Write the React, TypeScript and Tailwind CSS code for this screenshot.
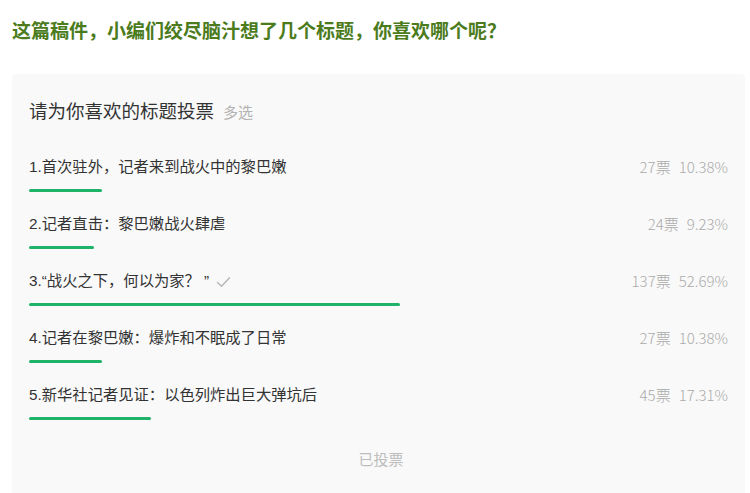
const options = [
  { label: '1.首次驻外，记者来到战火中的黎巴嫩', votes: 27, pct: 10.38 },
  { label: '2.记者直击：黎巴嫩战火肆虐', votes: 24, pct: 9.23 },
  { label: '3.“战火之下，何以为家？ ”', votes: 137, pct: 52.69, picked: true },
  { label: '4.记者在黎巴嫩：爆炸和不眠成了日常', votes: 27, pct: 10.38 },
  { label: '5.新华社记者见证：以色列炸出巨大弹坑后', votes: 45, pct: 17.31 },
];

function Check() {
  return (
    <svg width="15" height="12" viewBox="0 0 15 12" fill="none" className="ml-[7px]">
      <path d="M1.5 6.5 L5.5 10.2 L13.5 1.8" stroke="#b5b5b5" strokeWidth="1.4" strokeLinecap="round" strokeLinejoin="round" />
    </svg>
  );
}

export default function App() {
  return (
    <div
      className="w-[750px] h-[493px] overflow-hidden bg-white"
      style={{ fontFamily: '"Noto Sans CJK SC", "Noto Sans", sans-serif' }}
    >
      {/* Title */}
      <h1 className="pl-3 pt-[18px] text-[19px] leading-[24px] font-bold text-[#4b7b1c]">
        这篇稿件，小编们绞尽脑汁想了几个标题，你喜欢哪个呢？
      </h1>

      {/* Vote card */}
      <div className="mt-[32px] ml-3 mr-[5px] bg-[#f9f9f9] rounded-sm pl-[17px] pr-3 pt-[23px] pb-14">
        <div className="flex items-baseline gap-[9px]">
          <span className="text-[18.5px] leading-[26px] text-[#333]">请为你喜欢的标题投票</span>
          <span className="text-[15px] text-[#b2b2b2]">多选</span>
        </div>

        <div className="mt-[32px] flex flex-col">
          {options.map((o) => (
            <div key={o.label} className="h-[57px]">
              <div className="flex items-center justify-between h-[24px] pr-[5px]">
                <div
                  className="flex items-center text-[15.3px] text-[#333]"
                  style={{ fontFamily: '"Liberation Sans", "Noto Sans CJK SC", sans-serif' }}
                >
                  <span>{o.label}</span>
                  {o.picked && <Check />}
                </div>
                <div className="flex items-center gap-2 text-[15px] text-[#ababab] font-light">
                  <span>{o.votes}票</span>
                  <span>{o.pct.toFixed(2)}%</span>
                </div>
              </div>
              <div className="mt-[9px] h-[3px]">
                <div className="h-[3px] rounded-full bg-[#1fb36a]" style={{ width: `${o.pct}%` }} />
              </div>
            </div>
          ))}
        </div>

        <div className="mt-[6px] text-center text-[15px] leading-[24px] text-[#bdbdbd]">已投票</div>
      </div>
    </div>
  );
}
